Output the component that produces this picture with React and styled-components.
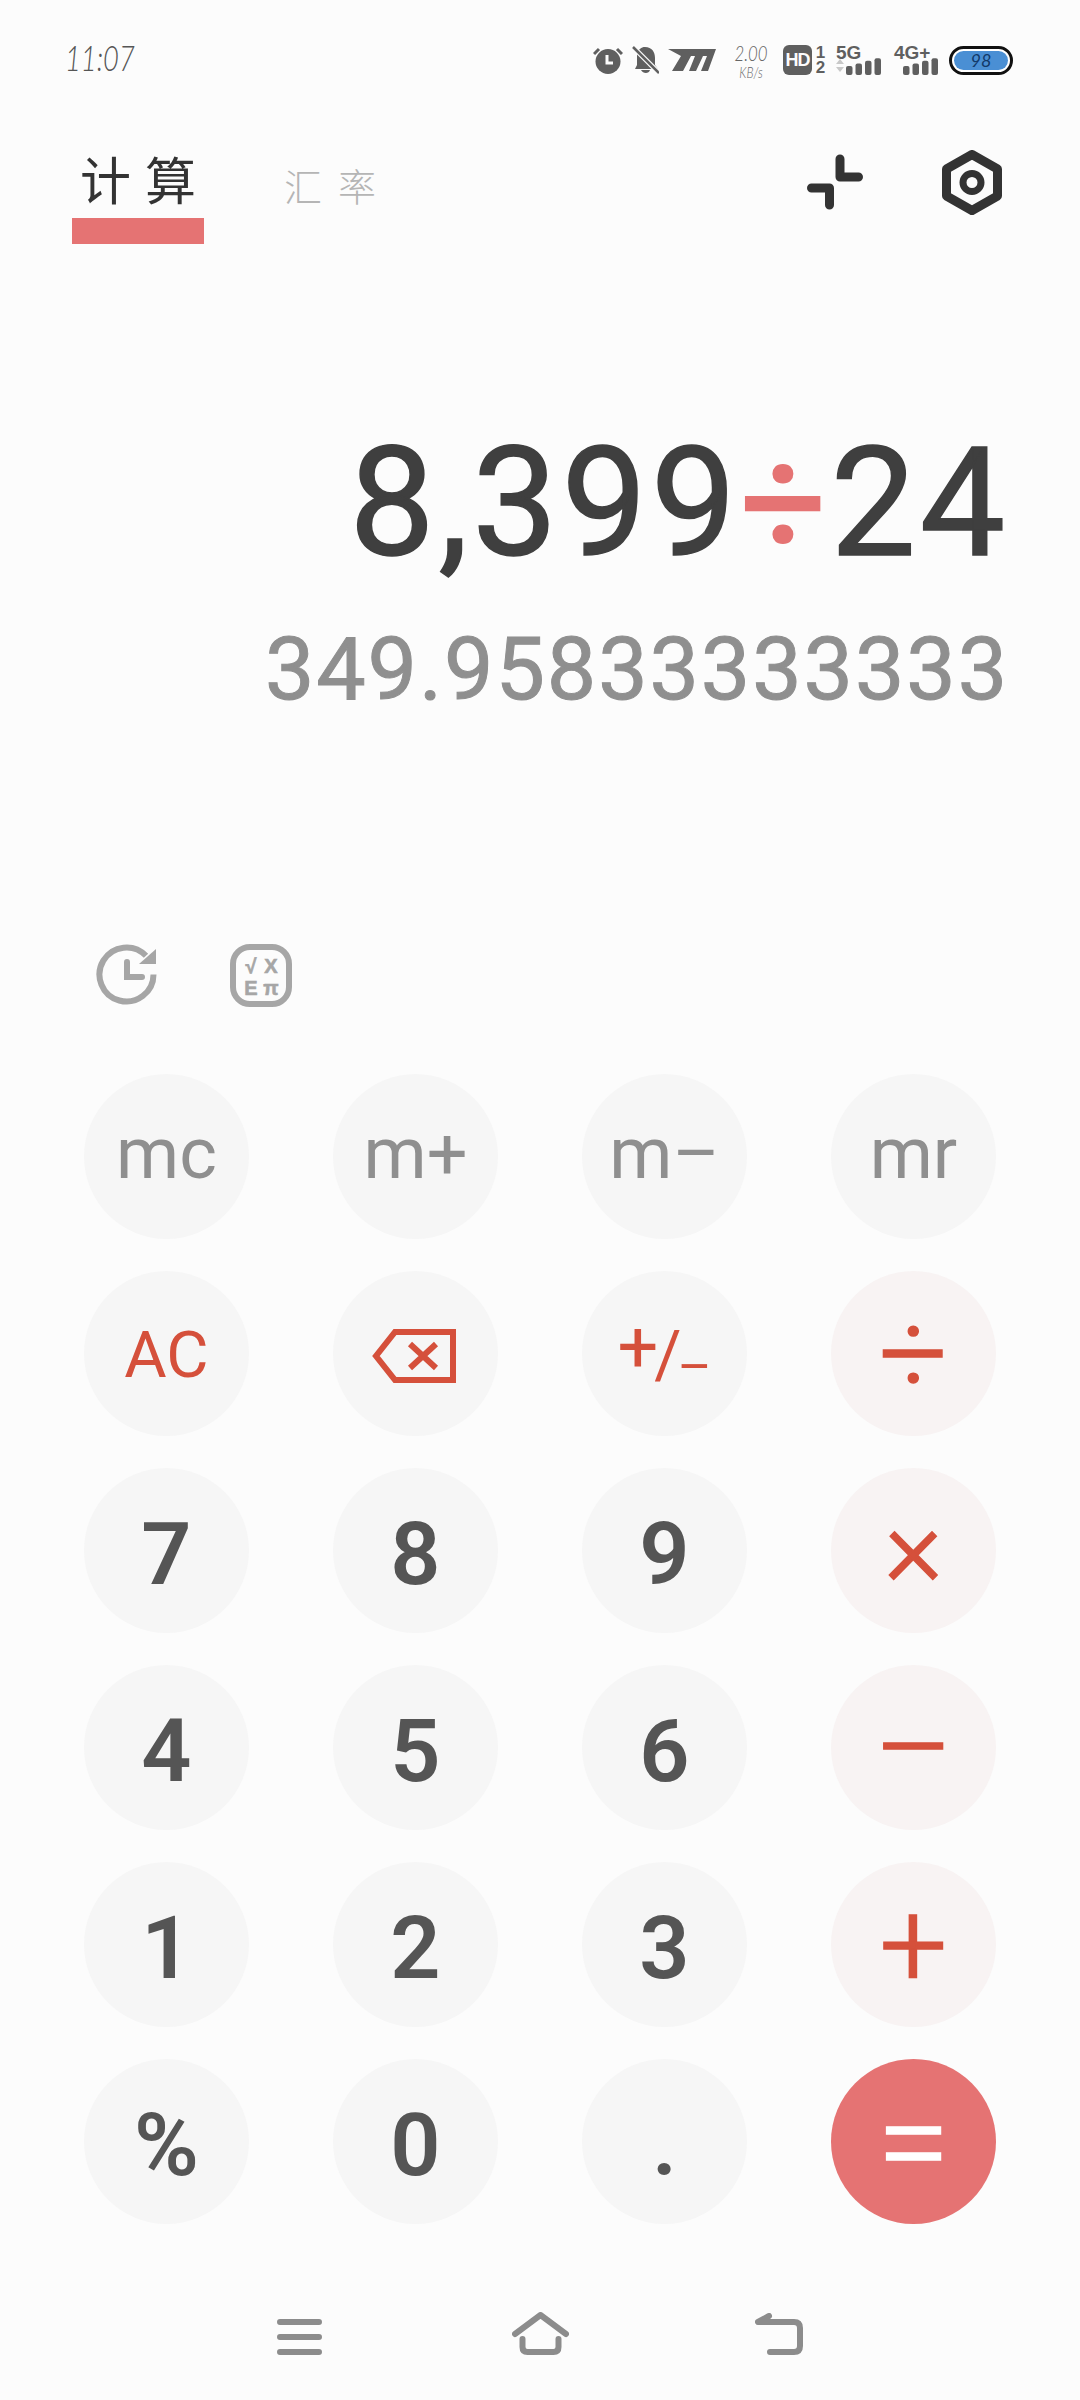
import styled, { createGlobalStyle } from "styled-components"

const GlobalStyle = createGlobalStyle`
html, body {
  margin: 0;
  padding: 0;
  background: #fcfcfc;
}
* { box-sizing: border-box; }
`

const Page = styled.div`
  width: 1080px;
  height: 2400px;
  background: #fcfcfc;
  display: flex;
  flex-direction: column;
  font-family: Roboto, "Liberation Sans", sans-serif;
  overflow: hidden;
`

const StatusBar = styled.div`
  height: 120px;
  padding: 0 67px 0 65px;
  display: flex;
  align-items: center;
`
const Time = styled.div`
  font-family: Lato, "Noto Sans", sans-serif;
  font-size: 35px;
  font-weight: 300;
  font-style: italic;
  color: #555;
  margin-right: auto;
  margin-top: -6px;
  transform: scaleX(0.78);
  transform-origin: left center;
`
const StatusItem = styled.div`
  margin-left: ${props => props.$left || 0}px;
  display: flex;
  align-items: center;
  color: #5f5f5f;
`
const Speed = styled.div`
  width: 28px;
  height: 36px;
  display: flex;
  flex-direction: column;
  align-items: center;
  font-family: Lato, "Noto Sans", sans-serif;
  font-style: italic;
  font-weight: 300;
  color: #666;
  line-height: 1;
  white-space: nowrap;
  transform: scaleX(0.8);
  span:first-child { font-size: 21px; margin-bottom: 2px; }
  span:last-child { font-size: 15px; }
`
const HdBadge = styled.div`
  width: 29px;
  height: 30px;
  border-radius: 6px;
  background: #5f5f5f;
  color: #fcfcfc;
  font-family: "Liberation Sans", sans-serif;
  font-size: 18px;
  font-weight: 700;
  letter-spacing: -1px;
  line-height: 30px;
  text-align: center;
`
const SimNumbers = styled.div`
  margin-left: 3px;
  width: 11px;
  display: flex;
  flex-direction: column;
  align-items: center;
  font-family: "Liberation Sans", sans-serif;
  font-size: 17px;
  font-weight: 700;
  line-height: 15px;
`
const SignalBlock = styled.div`
  width: ${props => props.$width}px;
  height: 30px;
  display: flex;
  flex-direction: column;
  justify-content: space-between;
  font-family: "Liberation Sans", sans-serif;
  font-size: 19px;
  font-weight: 700;
  line-height: 15px;
  svg { display: block; margin-top: -3px; align-self: flex-end; }
`
const Battery = styled.div`
  width: 64px;
  height: 29px;
  border: 3px solid #111;
  border-radius: 15px;
  padding: 2px;
  background: #fff;
`
const BatteryFill = styled.div`
  height: 100%;
  border-radius: 10px;
  background: #4a8fd4;
  color: #123a6a;
  font-family: Lato, sans-serif;
  font-style: italic;
  font-size: 18px;
  line-height: 19px;
  text-align: center;
`

const Header = styled.div`
  height: 126px;
  padding: 0 78px 2px 72px;
  display: flex;
  align-items: flex-end;
`
const Tab = styled.div`
  width: 132px;
  display: flex;
  flex-direction: column;
  align-items: center;
  font-family: "Noto Sans CJK SC", sans-serif;
  font-size: 51px;
  font-weight: 400;
  line-height: 70px;
  letter-spacing: 14px;
  color: #333;
  white-space: nowrap;
`
const TabLabel = styled.span`
  padding-left: 14px;
`
const TabBar = styled.div`
  width: 100%;
  height: 26px;
  margin-top: 5px;
  background: #e57373;
`
const TabPlain = styled.div`
  margin-left: 80px;
  margin-bottom: 29px;
  font-family: "Noto Sans CJK SC", sans-serif;
  font-size: 38px;
  font-weight: 300;
  line-height: 60px;
  letter-spacing: 16px;
  color: #b5b5b5;
`
const HeaderIcons = styled.div`
  margin-left: auto;
  align-self: center;
  display: flex;
  align-items: center;
  gap: 79px;
  color: #333;
`

const Display = styled.div`
  height: 698px;
  padding: 168px 71px 0 0;
  display: flex;
  flex-direction: column;
  align-items: flex-end;
`
const Expression = styled.div`
  font-size: 152px;
  line-height: 178px;
  letter-spacing: 3.8px;
  color: #3f3f3f;
  -webkit-text-stroke: 1.5px #3f3f3f;
  white-space: nowrap;
`
const Operator = styled.span`
  color: #e57373;
  font-weight: 500;
  -webkit-text-stroke: 0;
`
const Result = styled.div`
  margin-top: 25px;
  font-size: 88px;
  line-height: 103px;
  letter-spacing: 1.9px;
  color: #8f8f8f;
  -webkit-text-stroke: 1px #8f8f8f;
  white-space: nowrap;
`

const Tools = styled.div`
  height: 130px;
  padding-left: 96px;
  display: flex;
  align-items: flex-start;
  gap: 73px;
  color: #a6a6a6;
`

const Keypad = styled.div`
  padding: 0 84px;
  display: grid;
  grid-template-columns: repeat(4, 165px);
  grid-auto-rows: 165px;
  column-gap: 84px;
  row-gap: 32px;
`
const tones = {
  memory: { bg: "#f6f6f6", color: "#8f8f8f", size: 72, weight: 400, shift: -6, stroke: 0 },
  action: { bg: "#f6f6f6", color: "#d5503b", size: 65, weight: 400, shift: 4, stroke: 0 },
  digit: { bg: "#f6f6f6", color: "#555555", size: 88, weight: 600, shift: 6, stroke: 0 },
  operator: { bg: "#f8f3f3", color: "#d5503b", size: 120, weight: 300, shift: 0, stroke: 1.5 },
  equals: { bg: "#e57373", color: "#ffffff", size: 132, weight: 300, shift: 0, stroke: 1.5 },
}
const Key = styled.div`
  width: 165px;
  height: 165px;
  border-radius: 50%;
  display: flex;
  align-items: center;
  justify-content: center;
  padding-top: ${props => Math.max(props.$shift ?? tones[props.$tone].shift, 0)}px;
  padding-bottom: ${props => Math.max(-(props.$shift ?? tones[props.$tone].shift), 0)}px;
  background: ${props => tones[props.$tone].bg};
  color: ${props => tones[props.$tone].color};
  font-size: ${props => props.$size || tones[props.$tone].size}px;
  font-weight: ${props => tones[props.$tone].weight};
  -webkit-text-stroke: ${props => tones[props.$tone].stroke}px ${props => tones[props.$tone].color};
  line-height: 1;
  svg { margin-right: 4px; }
`
const Sign = styled.span`
  display: flex;
  align-items: center;
  white-space: nowrap;
`
const SignPart = styled.span`
  font-size: ${props => props.$size}px;
  margin-left: ${props => props.$left || 0}px;
  transform: translateY(${props => props.$y}px);
`

const NavBar = styled.div`
  margin-top: auto;
  height: 176px;
  padding-bottom: 45px;
  display: flex;
  align-items: flex-end;
  justify-content: center;
  gap: 188px;
  color: #8c8c8c;
  svg:nth-child(2) { margin: 0 -2px 0 2px; }
`

const Alarm = () => (
  <svg width="30" height="27" viewBox="0 0 30 27">
    <circle cx="15" cy="14.5" r="12.5" fill="currentColor" />
    <path d="M1 7 L6 2 M29 7 L24 2" stroke="currentColor" strokeWidth="3" />
    <path d="M14 8 V16 H20" stroke="#fcfcfc" strokeWidth="3" fill="none" />
  </svg>
)
const BellOff = () => (
  <svg width="27" height="28" viewBox="0 0 27 28">
    <path d="M13 1 C20 1 23 6 23 12 V19 L26 23 H3 L5 19 V8 C7 3 9 1 13 1 Z M9 24 H18 C17 28 11 28 9 24 Z" fill="currentColor" />
    <path d="M1 1 L27 27" stroke="#fcfcfc" strokeWidth="5" />
    <path d="M1 1 L27 27" stroke="currentColor" strokeWidth="2.5" />
  </svg>
)
const CarrierLogo = () => (
  <svg width="48" height="22" viewBox="0 0 48 22">
    <path d="M0 0 H48 L40 22 H33 L39 7 H35 L28 22 H21 L27 7 H23 L15 22 H4 L13 7 Z" fill="currentColor" />
  </svg>
)
const Signal = ({ label, width, arrows }) => (
  <SignalBlock $width={width}>
    {label}
    <svg width={arrows ? 45 : 35} height="17" viewBox={`0 0 ${arrows ? 45 : 35} 17`}>
      {arrows && <path d="M0 6 L4 1 L8 6 Z M0 9 L8 9 L4 14 Z" fill="#c8c8c8" />}
      {[0, 1, 2, 3].map(i => (
        <rect key={i} x={(arrows ? 10 : 0) + i * 9.5} y={8 - i * 2.6} width="6.5" height={9 + i * 2.6} rx="2" fill="currentColor" />
      ))}
    </svg>
  </SignalBlock>
)
const Collapse = () => (
  <svg width="56" height="56" viewBox="0 0 56 56" fill="none" stroke="currentColor" strokeWidth="9" strokeLinecap="round" strokeLinejoin="round">
    <path d="M33 5 V23 H51.5" />
    <path d="M4.5 34 H22.5 V51" />
  </svg>
)
const Settings = () => (
  <svg width="60" height="65" viewBox="0 0 60 65" fill="none" stroke="currentColor" strokeLinejoin="round">
    <path d="M30 4.5 L55.5 19 V46 L30 60.5 L4.5 46 V19 Z" strokeWidth="9" />
    <circle cx="30" cy="32.5" r="9" strokeWidth="7" />
  </svg>
)
const History = () => (
  <svg width="61" height="61" viewBox="0 0 61 61" fill="none" stroke="currentColor" strokeWidth="6">
    <path d="M57.5 30.5 A27 27 0 1 1 50 11.8" />
    <path d="M31 18 V33 H46" strokeLinecap="round" />
    <path d="M60 5 V20 H43 Z" fill="currentColor" stroke="none" />
  </svg>
)
const Formula = () => (
  <svg width="62" height="63" viewBox="0 0 62 63">
    <rect x="3" y="3" width="56" height="57" rx="17" fill="none" stroke="currentColor" strokeWidth="6" />
    <g fontFamily="Liberation Sans" fontWeight="700" fontSize="20" fill="currentColor" stroke="currentColor" strokeWidth="0.6" textAnchor="middle">
      <text x="21" y="29">√</text>
      <text x="41" y="29">X</text>
      <text x="21" y="51">E</text>
      <text x="41" y="51">π</text>
    </g>
  </svg>
)
const Backspace = () => (
  <svg width="84" height="54" viewBox="0 0 84 54" fill="none" stroke="currentColor" strokeWidth="6">
    <path d="M81 3 H23 L4 27 L23 51 H81 Z" />
    <path d="M38 15 L64 39 M64 15 L38 39" />
  </svg>
)
const MenuIcon = () => (
  <svg width="45" height="36" viewBox="0 0 45 36" stroke="currentColor" strokeWidth="6" strokeLinecap="round">
    <path d="M3 3 H42 M3 18 H42 M3 33 H42" />
  </svg>
)
const HomeIcon = () => (
  <svg width="57" height="43" viewBox="0 0 57 43" fill="none" stroke="currentColor" strokeWidth="6" strokeLinecap="round" strokeLinejoin="round">
    <path d="M3 22 L28.5 3 L54 22" />
    <path d="M10.5 27 V35 Q10.5 40 15.5 40 H41.5 Q46.5 40 46.5 35 V27" />
  </svg>
)
const BackIcon = () => (
  <svg width="48" height="42" viewBox="0 0 48 42" fill="none" stroke="currentColor" strokeWidth="6" strokeLinecap="round" strokeLinejoin="round">
    <path d="M14 3 L3 9 H39 Q45 9 45 15 V33 Q45 39 39 39 H15" />
  </svg>
)

const keys = [
  { label: "mc", tone: "memory" },
  { label: "m+", tone: "memory" },
  { label: "m–", tone: "memory" },
  { label: "mr", tone: "memory" },
  { label: "AC", tone: "action" },
  { label: <Backspace />, tone: "action" },
  {
    label: (
      <Sign>
        <SignPart $size={72} $y={-9}>+</SignPart>
        <SignPart $size={66} $y={0} $left={-4}>/</SignPart>
        <SignPart $size={52} $y={12} $left={-4}>–</SignPart>
      </Sign>
    ),
    tone: "action",
  },
  { label: "÷", tone: "operator" },
  { label: "7", tone: "digit" },
  { label: "8", tone: "digit" },
  { label: "9", tone: "digit" },
  { label: "×", tone: "operator", size: 112, shift: -8 },
  { label: "4", tone: "digit" },
  { label: "5", tone: "digit" },
  { label: "6", tone: "digit" },
  { label: "–", tone: "operator" },
  { label: "1", tone: "digit" },
  { label: "2", tone: "digit" },
  { label: "3", tone: "digit" },
  { label: "+", tone: "operator" },
  { label: "%", tone: "digit" },
  { label: "0", tone: "digit" },
  { label: ".", tone: "digit" },
  { label: "=", tone: "equals" },
]

const App = () => {
  return (
    <Page>
      <GlobalStyle />
      <StatusBar>
        <Time>11:07</Time>
        <StatusItem><Alarm /></StatusItem>
        <StatusItem $left={9}><BellOff /></StatusItem>
        <StatusItem $left={9}><CarrierLogo /></StatusItem>
        <StatusItem $left={21}><Speed><span>2.00</span><span>KB/s</span></Speed></StatusItem>
        <StatusItem $left={18}><HdBadge>HD</HdBadge><SimNumbers><span>1</span><span>2</span></SimNumbers></StatusItem>
        <StatusItem $left={10}><Signal label="5G" width={45} arrows /></StatusItem>
        <StatusItem $left={13}><Signal label="4G+" width={44} /></StatusItem>
        <StatusItem $left={11}><Battery><BatteryFill>98</BatteryFill></Battery></StatusItem>
      </StatusBar>
      <Header>
        <Tab><TabLabel>计算</TabLabel><TabBar /></Tab>
        <TabPlain>汇率</TabPlain>
        <HeaderIcons><Collapse /><Settings /></HeaderIcons>
      </Header>
      <Display>
        <Expression>8,399<Operator>÷</Operator>24</Expression>
        <Result>349.95833333333</Result>
      </Display>
      <Tools><History /><Formula /></Tools>
      <Keypad>
        {keys.map((key, i) => (
          <Key key={i} $tone={key.tone} $size={key.size} $shift={key.shift}>{key.label}</Key>
        ))}
      </Keypad>
      <NavBar><MenuIcon /><HomeIcon /><BackIcon /></NavBar>
    </Page>
  )
}

export default App
